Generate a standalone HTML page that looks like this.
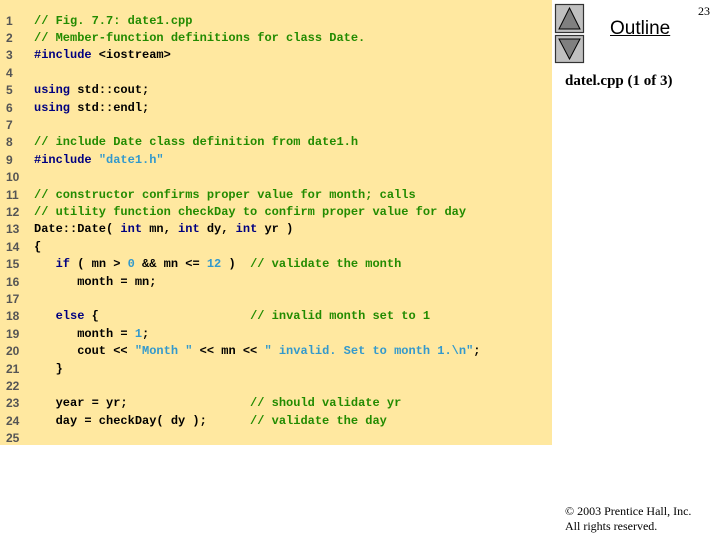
<!DOCTYPE html>
<html><head><meta charset="utf-8"><style>
body{margin:0;width:720px;height:540px;background:#fff;position:relative;overflow:hidden}
#panel{position:absolute;left:0;top:0;width:552px;height:445px;background:#FFE8A0}
.l{position:absolute;left:0;height:17px;line-height:17px;white-space:pre;font-family:"Liberation Mono",monospace;font-weight:bold;font-size:12px;color:#000}
.n{position:absolute;left:6px;width:20px;font-family:"Liberation Sans",sans-serif;font-weight:bold;font-size:12px;color:#555}
.c{position:absolute;left:34px}
.g{color:#228B00}.k{color:#000080}.s{color:#3399CC}
.t{position:absolute;font-family:"Liberation Serif",serif}
</style></head><body>
<div id="panel"></div>
<div id="code"></div>
<svg style="position:absolute;left:554px;top:3px" width="32" height="61">
<rect x="1.5" y="1.5" width="28" height="28" fill="#c0c0c0" stroke="#333" stroke-width="1.2"/>
<polygon points="15.5,5 26,26 5,26" fill="#808080" stroke="#000"/>
<rect x="1.5" y="32.5" width="28" height="27" fill="#c0c0c0" stroke="#333" stroke-width="1.2"/>
<polygon points="5,36 26,36 15.5,56" fill="#808080" stroke="#000"/>
</svg>
<div style="position:absolute;left:610px;top:18px;font-family:'Liberation Sans',sans-serif;font-size:19px;text-decoration:underline">Outline</div>
<div class="t" style="left:698px;top:4px;font-size:12px">23</div>
<div class="t" style="left:565px;top:73px;font-size:15px;font-weight:bold">datel.cpp (1 of 3)</div>
<div class="t" style="left:565px;top:504px;font-size:12px">© 2003 Prentice Hall, Inc.</div>
<div class="t" style="left:565px;top:519px;font-size:12px">All rights reserved.</div>
<script>
var L=[
'<span class="g">// Fig. 7.7: date1.cpp</span>',
'<span class="g">// Member-function definitions for class Date.</span>',
'<span class="k">#include</span> &lt;iostream&gt;',
'',
'<span class="k">using</span> std::cout;',
'<span class="k">using</span> std::endl;',
'',
'<span class="g">// include Date class definition from date1.h</span>',
'<span class="k">#include</span> <span class="s">"date1.h"</span>',
'',
'<span class="g">// constructor confirms proper value for month; calls</span>',
'<span class="g">// utility function checkDay to confirm proper value for day</span>',
'Date::Date( <span class="k">int</span> mn, <span class="k">int</span> dy, <span class="k">int</span> yr )',
'{',
'   <span class="k">if</span> ( mn &gt; <span class="s">0</span> &amp;&amp; mn &lt;= <span class="s">12</span> )  <span class="g">// validate the month</span>',
'      month = mn;',
'',
'   <span class="k">else</span> {                     <span class="g">// invalid month set to 1</span>',
'      month = <span class="s">1</span>;',
'      cout &lt;&lt; <span class="s">"Month "</span> &lt;&lt; mn &lt;&lt; <span class="s">" invalid. Set to month 1.\\n"</span>;',
'   }',
'',
'   year = yr;                 <span class="g">// should validate yr</span>',
'   day = checkDay( dy );      <span class="g">// validate the day</span>',
''];
var h='';
for(var i=0;i<L.length;i++){var y=12.5+i*17.4;h+='<div class="l" style="top:'+y+'px"><span class="n">'+(i+1)+'</span><span class="c">'+L[i]+'</span></div>';}
document.getElementById('code').innerHTML=h;
</script>
</body></html>
